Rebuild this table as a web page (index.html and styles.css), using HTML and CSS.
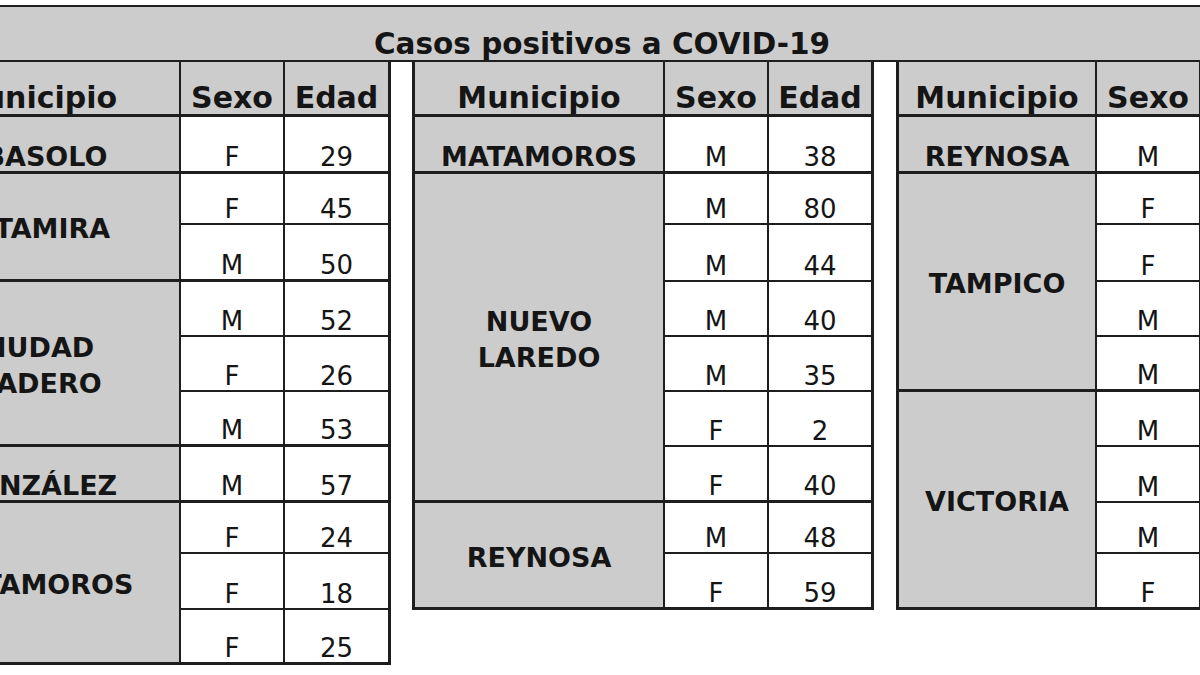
FILE: index.html
```html
<!DOCTYPE html>
<html lang="es">
<head>
<meta charset="utf-8">
<title>Casos positivos a COVID-19</title>
<link rel="stylesheet" href="styles.css">
</head>
<body>
<div class="sheet">
  <div class="title">Casos positivos a COVID-19</div>
  <div class="tables">
    <div class="tbl tbl-left rows10">
      <div class="h muni">Municipio</div><div class="h">Sexo</div><div class="h last">Edad</div>
      <div class="m one">ABASOLO</div><div class="d end">F</div><div class="d last end">29</div>
      <div class="m span2">ALTAMIRA</div><div class="d">F</div><div class="d last">45</div><div class="d end">M</div><div class="d last end">50</div>
      <div class="m span3">CIUDAD<br>MADERO</div><div class="d">M</div><div class="d last">52</div><div class="d">F</div><div class="d last">26</div><div class="d end">M</div><div class="d last end">53</div>
      <div class="m one">GONZÁLEZ</div><div class="d end">M</div><div class="d last end">57</div>
      <div class="m span3">MATAMOROS</div><div class="d">F</div><div class="d last">24</div><div class="d">F</div><div class="d last">18</div><div class="d end">F</div><div class="d last end">25</div>
    </div>
    <div class="tbl tbl-mid rows9">
      <div class="h muni">Municipio</div><div class="h">Sexo</div><div class="h last">Edad</div>
      <div class="m one">MATAMOROS</div><div class="d end">M</div><div class="d last end">38</div>
      <div class="m span6">NUEVO<br>LAREDO</div><div class="d">M</div><div class="d last">80</div><div class="d">M</div><div class="d last">44</div><div class="d">M</div><div class="d last">40</div><div class="d">M</div><div class="d last">35</div><div class="d">F</div><div class="d last">2</div><div class="d end">F</div><div class="d last end">40</div>
      <div class="m span2">REYNOSA</div><div class="d">M</div><div class="d last">48</div><div class="d end">F</div><div class="d last end">59</div>
    </div>
    <div class="tbl tbl-right rows9">
      <div class="h muni">Municipio</div><div class="h">Sexo</div><div class="h last">Edad</div>
      <div class="m one">REYNOSA</div><div class="d end">M</div><div class="d last end"></div>
      <div class="m span4">TAMPICO</div><div class="d">F</div><div class="d last"></div><div class="d">F</div><div class="d last"></div><div class="d">M</div><div class="d last"></div><div class="d end">M</div><div class="d last end"></div>
      <div class="m span4">VICTORIA</div><div class="d">M</div><div class="d last"></div><div class="d">M</div><div class="d last"></div><div class="d">M</div><div class="d last"></div><div class="d end">F</div><div class="d last end"></div>
    </div>
  </div>
</div>
</body>
</html>
```
FILE: styles.css
```css
html, body {
  margin: 0;
  padding: 0;
  background: #ffffff;
  overflow: hidden;
}
body {
  width: 1200px;
  height: 675px;
  font-family: "DejaVu Sans", Verdana, sans-serif;
  color: #151515;
}
.sheet {
  width: 1418px;
  margin-left: -111px;
  padding-top: 5px;
}
.title {
  box-sizing: border-box;
  height: 57px;
  border-top: 2px solid #1e1e1e;
  border-bottom: 2px solid #1e1e1e;
  background: #cccccc;
  display: flex;
  align-items: flex-end;
  justify-content: center;
  padding-left: 8px;
  padding-bottom: 1px;
  font-weight: bold;
  font-size: 29.5px;
  line-height: 1;
}
.tables {
  display: flex;
  align-items: flex-start;
}
.tbl {
  display: grid;
  border-left: 3px solid #1e1e1e;
  grid-template-columns: 250px 104px 105px;
}
.tbl-left {
  grid-template-columns: 289px 104px 106px;
  margin-right: 21px;
}
.tbl-mid {
  margin-right: 22px;
}
.tbl-right {
  grid-template-columns: 198px 104px 105px;
}
.rows10 {
  grid-template-rows: 55px 57px 51px 57px 55px 55px 55px 56px 51px 56px 55px;
}
.rows9 {
  grid-template-rows: 55px 57px 51px 57px 55px 55px 55px 56px 51px 56px;
}
.tbl > div {
  box-sizing: border-box;
  border-right: 2px solid #1e1e1e;
  border-bottom: 2px solid #1e1e1e;
  display: flex;
  justify-content: center;
  text-align: center;
}
.tbl > .last {
  border-right-width: 3px;
}
.h {
  background: #cccccc;
  border-bottom-width: 3px !important;
  align-items: flex-end;
  font-weight: bold;
  font-size: 30px;
  line-height: 1;
  padding-bottom: 1px;
}
.m {
  background: #cccccc;
  border-bottom-width: 3px !important;
  font-weight: bold;
  font-size: 27px;
  line-height: 36px;
}
.m.one {
  align-items: flex-end;
  line-height: 1;
  padding-bottom: 1px;
}
.span2, .span3, .span4, .span6 {
  align-items: center;
  padding-top: 5px;
}
.span2 { grid-row: span 2; }
.span3 { grid-row: span 3; }
.span4 { grid-row: span 4; }
.span6 { grid-row: span 6; }
.d {
  background: #ffffff;
  align-items: flex-end;
  font-size: 26px;
  line-height: 1;
  padding-bottom: 1px;
}
.d.end {
  border-bottom-width: 3px;
}
```
